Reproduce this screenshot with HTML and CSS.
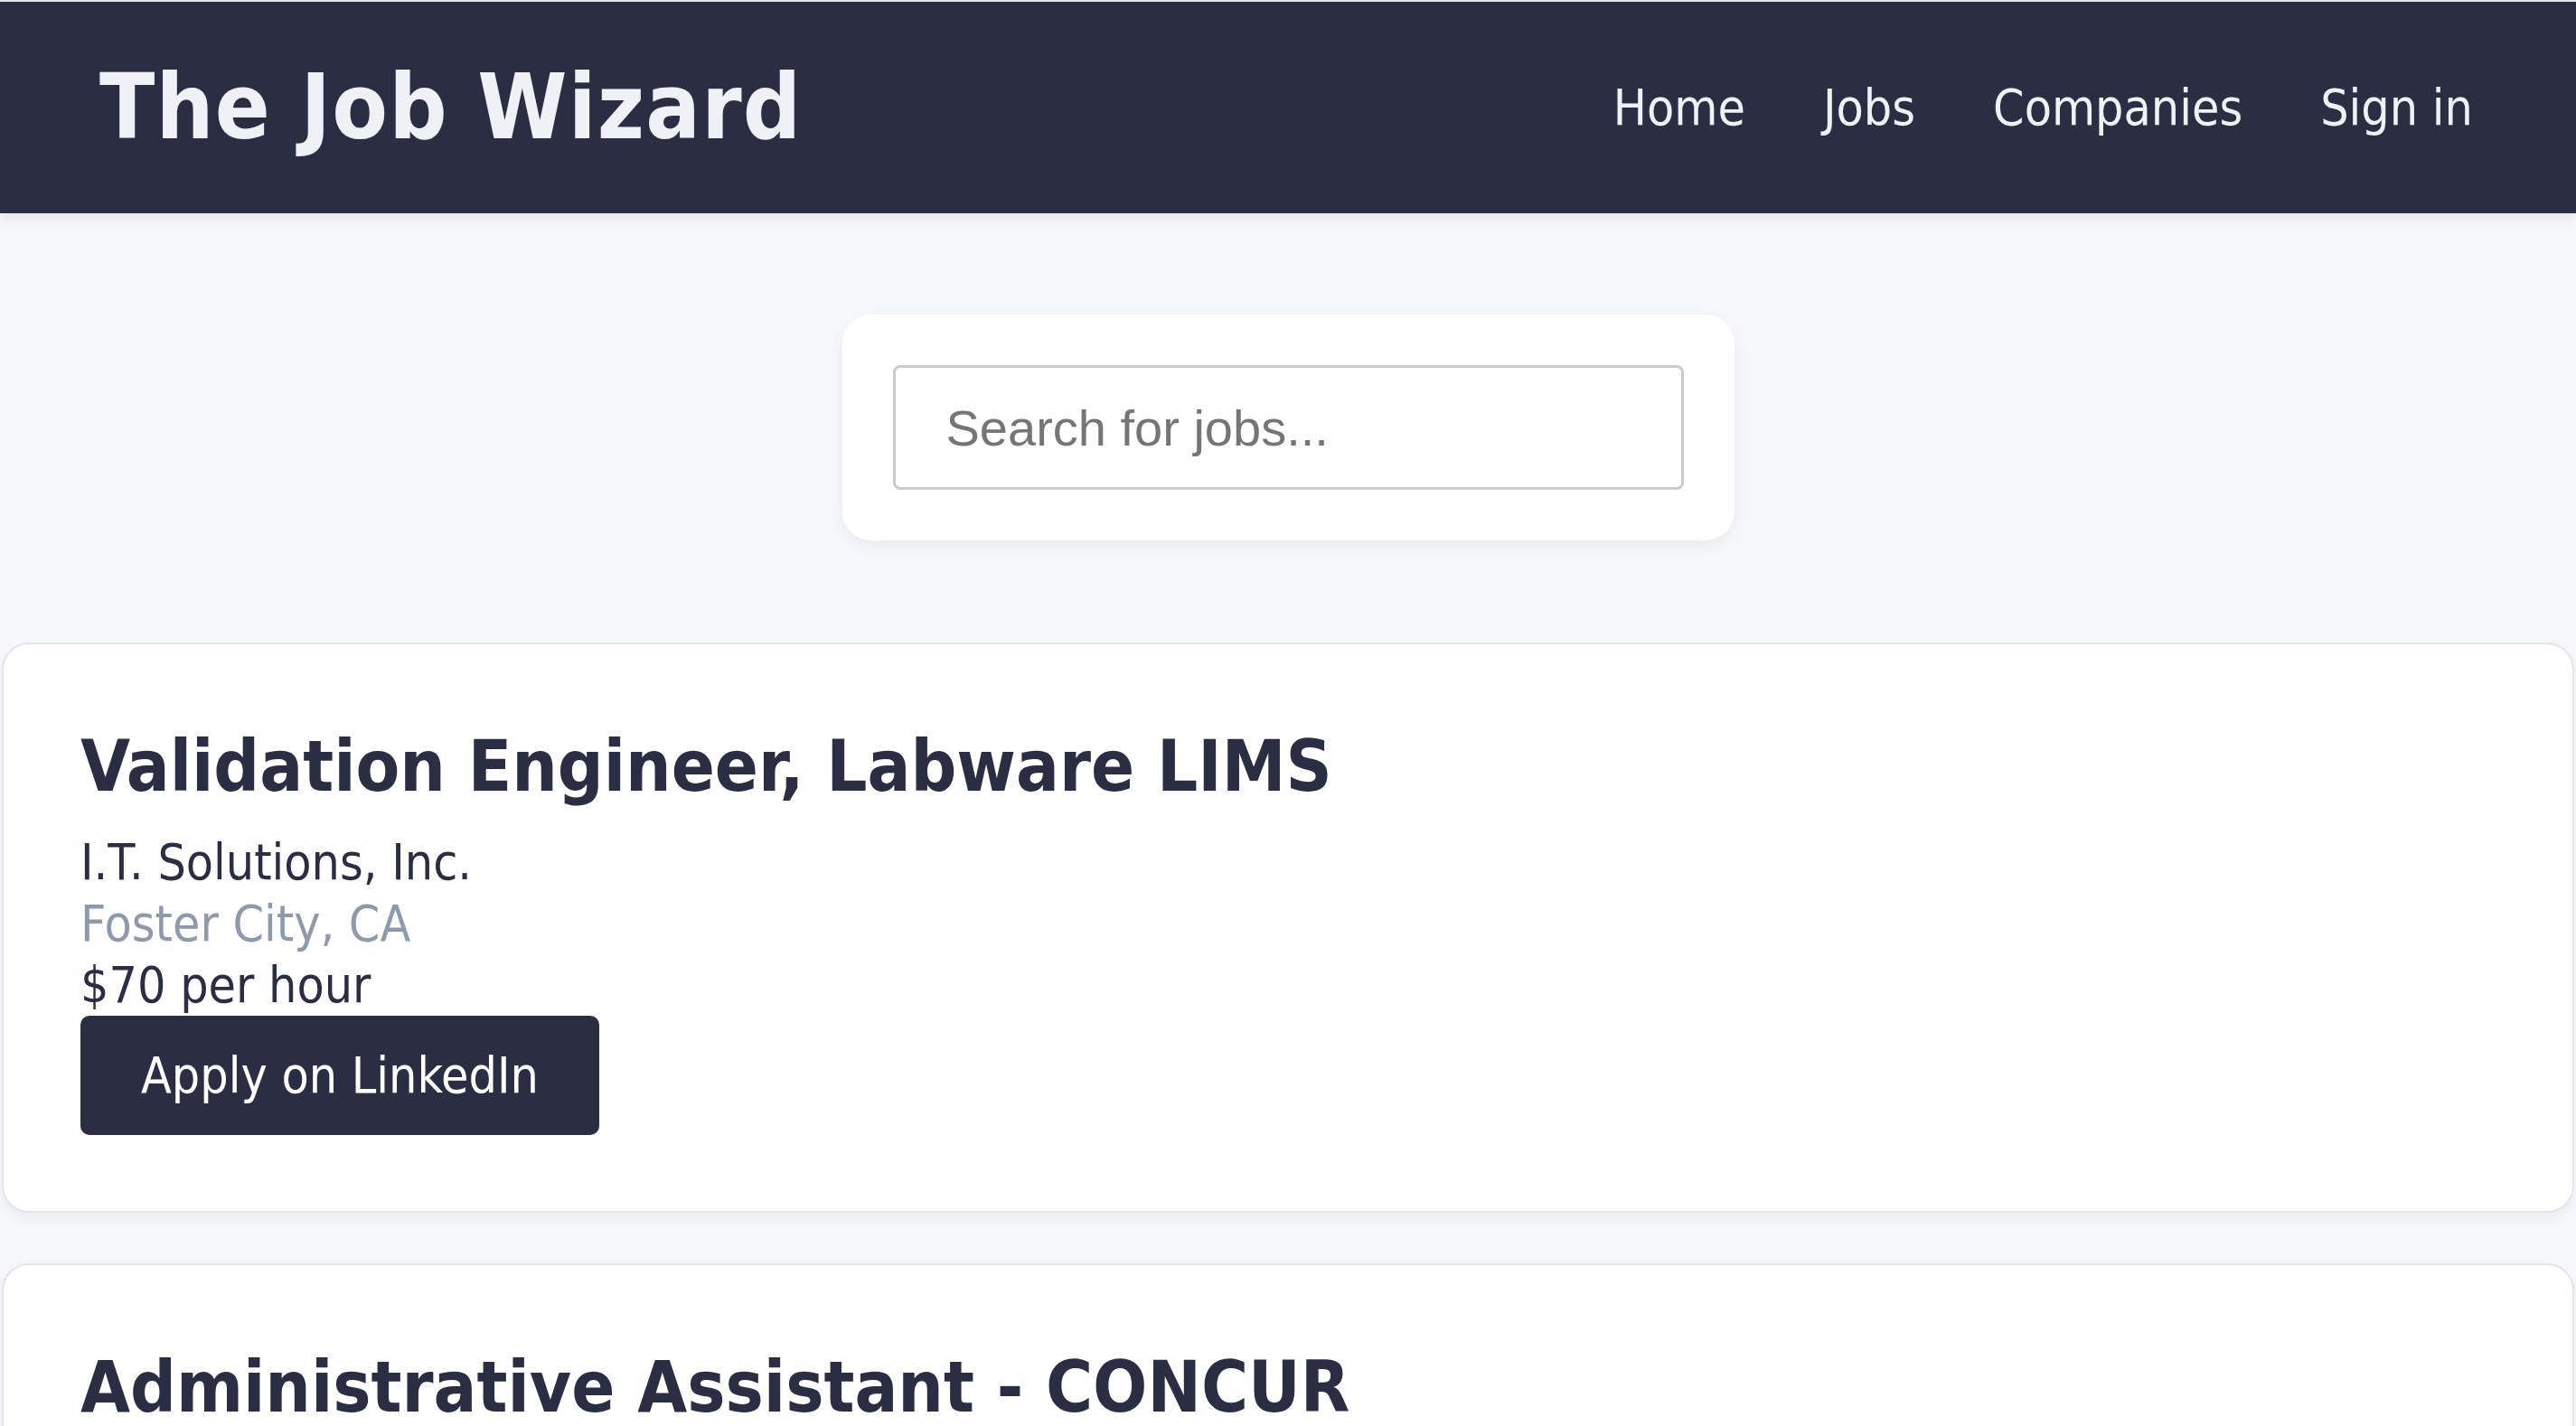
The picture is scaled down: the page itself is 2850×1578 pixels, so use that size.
FILE: index.html
```html
<!DOCTYPE html>
<html lang="en">
<head>
<meta charset="utf-8">
<title>The Job Wizard</title>
<link rel="stylesheet" href="styles.css">
</head>
<body>
<header class="topbar">
  <div class="brand">The Job Wizard</div>
  <nav class="nav">
    <a class="nav-link" href="#">Home</a>
    <a class="nav-link" href="#">Jobs</a>
    <a class="nav-link" href="#">Companies</a>
    <a class="nav-link" href="#">Sign in</a>
  </nav>
</header>
<main class="main">
  <section class="search-wrap">
    <div class="search-card">
      <input class="search-input" type="text" placeholder="Search for jobs...">
    </div>
  </section>
  <section class="job-list">
    <article class="job-card">
      <h2 class="job-title">Validation Engineer, Labware LIMS</h2>
      <div class="job-company">I.T. Solutions, Inc.</div>
      <div class="job-location">Foster City, CA</div>
      <div class="job-pay">$70 per hour</div>
      <a class="apply-btn" href="#">Apply on LinkedIn</a>
    </article>
    <article class="job-card">
      <h2 class="job-title">Administrative Assistant - CONCUR</h2>
      <div class="job-company">Concur</div>
      <div class="job-location">Bellevue, WA</div>
      <div class="job-pay">$30 per hour</div>
      <a class="apply-btn" href="#">Apply on LinkedIn</a>
    </article>
  </section>
</main>
</body>
</html>
```

FILE: styles.css
```css
* { box-sizing: border-box; }
html, body { margin: 0; padding: 0; }
body {
  background: #f7f8fa;
  border-top: 2px solid #e4e5e7;
  font-family: "DejaVu Sans Condensed", "DejaVu Sans", sans-serif;
  color: #2b2e42;
}
.topbar {
  height: 234px;
  background: #2b2e42;
  display: flex;
  align-items: center;
  justify-content: space-between;
  padding: 0 114px 0 110px;
  box-shadow: 0 6px 14px rgba(0,0,0,0.08);
  position: relative;
}
.brand {
  font-size: 100px;
  font-weight: 700;
  letter-spacing: 1.2px;
  color: #eef1f5;
  line-height: 1;
}
.nav { display: flex; gap: 86px; }
.nav-link {
  color: #eef1f5;
  text-decoration: none;
  font-size: 55px;
  line-height: 1;
}
.main { padding: 0 2px; }
.search-wrap {
  display: flex;
  justify-content: center;
  padding: 112px 0 113px;
}
.search-card {
  width: 987px;
  height: 250px;
  background: #fff;
  border-radius: 32px;
  padding: 56px;
  box-shadow: 0 6px 20px rgba(0,0,0,0.06);
}
.search-input {
  width: 100%;
  height: 138px;
  border: 3px solid #cbcbcb;
  border-radius: 8px;
  padding: 0 56px;
  font-family: "Liberation Sans", Arial, sans-serif;
  font-size: 56px;
  color: #333;
  outline: none;
}
.search-input::placeholder { color: #757575; }
.job-list { display: flex; flex-direction: column; gap: 56px; }
.job-card {
  background: #fff;
  border: 2px solid #e3e5e9;
  border-radius: 30px;
  padding: 84px 84px 84px 85px;
  box-shadow: 0 6px 16px rgba(0,0,0,0.05);
  display: flex;
  flex-direction: column;
  align-items: flex-start;
}
.job-title {
  margin: 0 0 20px;
  font-size: 79px;
  font-weight: 700;
  line-height: 1.3;
}
.job-company, .job-location, .job-pay {
  font-size: 55px;
  line-height: 68px;
}
.job-location { color: #8e99ab; }
.apply-btn {
  background: #2b2e42;
  color: #fff;
  text-decoration: none;
  font-size: 55px;
  line-height: 68px;
  padding: 32px 67px;
  border-radius: 10px;
}
```
